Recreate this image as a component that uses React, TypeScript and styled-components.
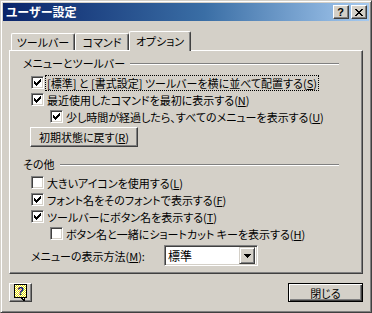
import React from 'react';
import styled, { createGlobalStyle } from 'styled-components';

const FACE = '#d4d0c8';
const SHADOW = '#808080';
const DARK = '#404040';
const FONT = `"Noto Sans CJK JP", "Noto Sans", sans-serif`;

const Global = createGlobalStyle`
  html, body { margin: 0; padding: 0; background: ${FACE}; }
  body { font-family: ${FONT}; font-size: 11px; }
  * { box-sizing: border-box; }
`;

const Window = styled.div`
  width: 372px;
  height: 313px;
  background: ${FACE};
  border: 1px solid;
  border-color: ${FACE} ${DARK} ${DARK} ${FACE};
  box-shadow: inset 1px 1px #fff, inset -1px -1px ${SHADOW};
  padding: 2px;
  display: flex;
  flex-direction: column;
  font-family: ${FONT};
  font-size: 11px;
  color: #000;
  font-feature-settings: "palt";
`;

const TitleBar = styled.div`
  height: 18px;
  display: flex;
  align-items: center;
  background: linear-gradient(to right, #0a246a 0%, #3a6ea5 55%, #a6caf0 100%);
  padding: 0 2px 0 3px;
`;

const Title = styled.div`
  flex: 1;
  color: #fff;
  font-weight: bold;
  font-size: 12px;
  line-height: 18px;
`;

const CaptionButtons = styled.div`
  display: flex;
  gap: 2px;
`;

const CaptionButton = styled.div`
  width: 16px;
  height: 14px;
  background: ${FACE};
  border: 1px solid;
  border-color: #fff ${DARK} ${DARK} #fff;
  box-shadow: inset -1px -1px ${SHADOW};
  display: flex;
  align-items: center;
  justify-content: center;
  font-family: "Liberation Sans", Arial, sans-serif;
  font-weight: bold;
  font-size: 11px;
  line-height: 1;
  padding-right: 1px;
`;

const Client = styled.div`
  flex: 1;
  display: flex;
  flex-direction: column;
  padding: 10px 6px 0;
`;

const TabStrip = styled.div`
  display: flex;
  align-items: flex-end;
  height: 19px;
  padding-left: 2px;
  position: relative;
  z-index: 1;
`;

const Tab = styled.div<{ $w: number; $active?: boolean }>`
  width: ${p => p.$w}px;
  height: ${p => (p.$active ? 20 : 17)}px;
  margin-bottom: ${p => (p.$active ? -1 : 0)}px;
  background: ${FACE};
  border-top: 1px solid #fff;
  border-left: 1px solid #fff;
  border-right: 1px solid ${DARK};
  border-radius: 2px 2px 0 0;
  box-shadow: inset -1px 0 ${SHADOW};
  display: flex;
  align-items: flex-start;
  justify-content: center;
  padding-top: ${p => (p.$active ? 2 : 1)}px;
  line-height: 14px;
`;

const Panel = styled.div`
  border: 1px solid;
  border-color: #fff ${DARK} ${DARK} #fff;
  box-shadow: inset -1px -1px ${SHADOW};
  padding: 5px 0 7px 13px;
  display: flex;
  flex-direction: column;
`;

const GroupHeader = styled.div<{ $mt?: number }>`
  display: flex;
  align-items: center;
  height: 14px;
  line-height: 14px;
  margin-top: ${p => p.$mt ?? 0}px;
`;

const Rule = styled.div`
  flex: 1;
  height: 2px;
  margin: 1px 23px 0 5px;
  border-top: 1px solid ${SHADOW};
  border-bottom: 1px solid #fff;
`;

const CheckRow = styled.div<{ $level?: number; $mt?: number }>`
  display: flex;
  align-items: center;
  height: 17px;
  padding-left: ${p => (p.$level === 2 ? 27 : 8)}px;
  margin-top: ${p => p.$mt ?? 0}px;
`;

const Box = styled.div`
  width: 13px;
  height: 13px;
  flex: none;
  background: #fff;
  border: 1px solid;
  border-color: ${SHADOW} #fff #fff ${SHADOW};
  box-shadow: inset 1px 1px ${DARK}, inset -1px -1px ${FACE};
  display: flex;
  align-items: center;
  justify-content: center;
`;

const Label = styled.span<{ $focused?: boolean }>`
  margin-left: 1px;
  padding: 0 1px;
  line-height: 14px;
  border: 1px dotted ${p => (p.$focused ? '#000' : 'transparent')};
  white-space: nowrap;
`;

const Key = styled.u`
  text-decoration: underline;
  text-underline-offset: 1px;
`;

const PushButton = styled.div<{ $w: number; $h: number; $default?: boolean; $ml?: number; $mt?: number }>`
  width: ${p => p.$w}px;
  height: ${p => p.$h}px;
  margin-left: ${p => p.$ml ?? 0}px;
  margin-top: ${p => p.$mt ?? 0}px;
  background: ${FACE};
  border: 1px solid;
  border-color: ${p => (p.$default ? '#000' : `#fff ${DARK} ${DARK} #fff`)};
  box-shadow: ${p =>
    p.$default
      ? `inset 1px 1px #fff, inset -1px -1px ${DARK}, inset -2px -2px ${SHADOW}`
      : `inset -1px -1px ${SHADOW}`};
  display: flex;
  align-items: center;
  justify-content: center;
  line-height: 14px;
  white-space: nowrap;
`;

const ComboRow = styled.div`
  display: flex;
  align-items: center;
  height: 21px;
  margin-top: 3px;
  padding-left: 8px;
`;

const ComboLabel = styled.span`
  width: 133px;
  line-height: 14px;
`;

const Combo = styled.div`
  width: 94px;
  height: 21px;
  background: #fff;
  border: 1px solid;
  border-color: ${SHADOW} #fff #fff ${SHADOW};
  box-shadow: inset 1px 1px ${DARK}, inset -1px -1px ${FACE};
  display: flex;
  align-items: center;
  padding: 2px;
`;

const ComboValue = styled.span`
  flex: 1;
  padding-left: 1px;
  line-height: 14px;
  font-size: 12px;
`;

const DropButton = styled.div`
  width: 16px;
  height: 17px;
  background: ${FACE};
  border: 1px solid;
  border-color: ${FACE} ${DARK} ${DARK} ${FACE};
  box-shadow: inset 1px 1px #fff, inset -1px -1px ${SHADOW};
  display: flex;
  align-items: center;
  justify-content: center;
`;

const Footer = styled.div`
  display: flex;
  justify-content: space-between;
  align-items: center;
  margin-top: 9px;
`;

const Check = () => (
  <svg width="7" height="7" viewBox="0 0 7 7" shapeRendering="crispEdges">
    {[2, 3, 4, 3, 2, 1, 0].map((y, x) => (
      <rect key={x} x={x} y={y} width="1" height="3" fill="#000" />
    ))}
  </svg>
);

const CheckBox = ({ checked }: { checked?: boolean }) => <Box>{checked && <Check />}</Box>;

const CloseGlyph = () => (
  <svg width="8" height="7" viewBox="0 0 8 7" shapeRendering="crispEdges">
    <path d="M0 0h2v1h1v1h2V1h1V0h2v1h-1v1h-1v1h-1v1h1v1h1v1h1v1H6V6H5V5H3v1H2v1H0V6h1V5h1V4h1V3H2V2H1V1H0z" fill="#000" />
  </svg>
);

const Arrow = () => (
  <svg width="7" height="4" viewBox="0 0 7 4" shapeRendering="crispEdges">
    <path d="M0 0h7v1h-1v1h-1v1h-1v1h-1v-1h-1v-1h-1v-1h-1z" fill="#000" />
  </svg>
);

const HelpIcon = () => (
  <svg width="15" height="17" viewBox="0 0 15 17" shapeRendering="crispEdges">
    <defs>
      <pattern id="dots" width="2" height="2" patternUnits="userSpaceOnUse">
        <rect width="2" height="2" fill="#fff" />
        <rect width="1" height="1" fill="#e8e000" />
        <rect x="1" y="1" width="1" height="1" fill="#e8e000" />
      </pattern>
    </defs>
    <rect x="1.5" y="0.5" width="12" height="13" fill="url(#dots)" stroke="#000" />
    <path d="M8 13.5 L11 16.5 L11 13.5" fill="#fff" stroke="#000" />
    <text x="7.5" y="11" textAnchor="middle" fontFamily="Liberation Sans, Arial, sans-serif" fontWeight="bold" fontSize="11" fill="#000080">?</text>
  </svg>
);

type Item = { text: string; key: string; checked?: boolean; level?: number; focused?: boolean };

const group1: Item[] = [
  { text: '[標準] と [書式設定] ツールバーを横に並べて配置する', key: 'S', checked: true, focused: true },
  { text: '最近使用したコマンドを最初に表示する', key: 'N', checked: true },
  { text: '少し時間が経過したら、すべてのメニューを表示する', key: 'U', checked: true, level: 2 },
];

const group2: Item[] = [
  { text: '大きいアイコンを使用する', key: 'L' },
  { text: 'フォント名をそのフォントで表示する', key: 'F', checked: true },
  { text: 'ツールバーにボタン名を表示する', key: 'T', checked: true },
  { text: 'ボタン名と一緒にショートカット キーを表示する', key: 'H', level: 2 },
];

const Rows = ({ items, mt }: { items: Item[]; mt: number }) => (
  <>
    {items.map((it, i) => (
      <CheckRow key={it.key} $level={it.level} $mt={i === 0 ? mt : 0}>
        <CheckBox checked={it.checked} />
        <Label $focused={it.focused}>
          {it.text}(<Key>{it.key}</Key>)
        </Label>
      </CheckRow>
    ))}
  </>
);

export default function App() {
  return (
    <>
      <Global />
      <Window>
        <TitleBar>
          <Title>ユーザー設定</Title>
          <CaptionButtons>
            <CaptionButton>?</CaptionButton>
            <CaptionButton>
              <CloseGlyph />
            </CaptionButton>
          </CaptionButtons>
        </TitleBar>
        <Client>
          <TabStrip>
            <Tab $w={64}>ツールバー</Tab>
            <Tab $w={54}>コマンド</Tab>
            <Tab $w={62} $active>
              オプション
            </Tab>
          </TabStrip>
          <Panel>
            <GroupHeader>
              メニューとツールバー
              <Rule />
            </GroupHeader>
            <Rows items={group1} mt={4} />
            <PushButton $w={108} $h={20} $ml={7} $mt={2}>
              初期状態に戻す(<Key>R</Key>)
            </PushButton>
            <GroupHeader $mt={10}>
              その他
              <Rule />
            </GroupHeader>
            <Rows items={group2} mt={3} />
            <ComboRow>
              <ComboLabel>
                メニューの表示方法(<Key>M</Key>):
              </ComboLabel>
              <Combo>
                <ComboValue>標準</ComboValue>
                <DropButton>
                  <Arrow />
                </DropButton>
              </Combo>
            </ComboRow>
          </Panel>
          <Footer>
            <PushButton $w={23} $h={19}>
              <HelpIcon />
            </PushButton>
            <PushButton $w={75} $h={19} $default>
              閉じる
            </PushButton>
          </Footer>
        </Client>
      </Window>
    </>
  );
}
